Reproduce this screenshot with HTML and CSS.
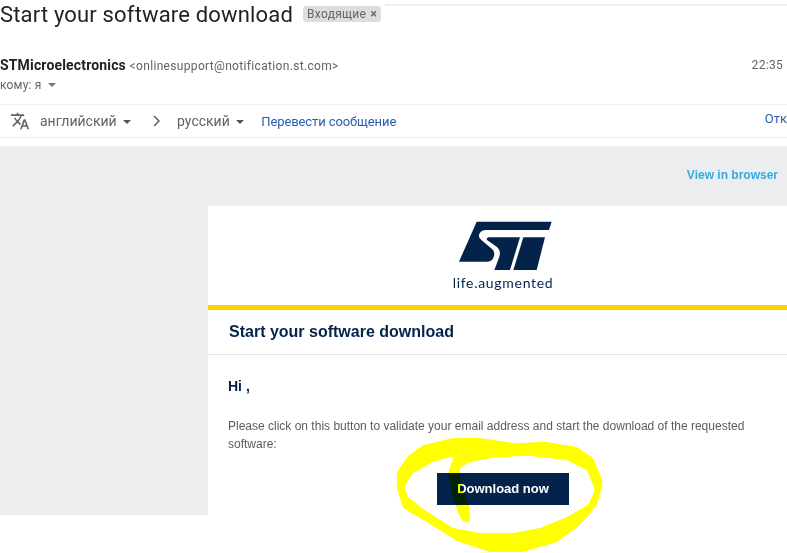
FILE: index.html
```html
<!DOCTYPE html>
<html lang="ru">
<head>
<meta charset="UTF-8" />
<meta name="viewport" content="width=device-width, initial-scale=1" />
<title>Start your software download</title>
<link rel="stylesheet" href="styles.css">
</head>
<body>
<div class="page">
  <div class="top-line"></div>

  <div class="subject">
    <h1>Start your software download</h1>
    <span class="label">Входящие <span class="label-x">×</span></span>
  </div>

  <div class="sender">
    <div><b>STMicroelectronics</b> <span class="address">&lt;onlinesupport@notification.st.com&gt;</span></div>
    <div class="time">22:35</div>
  </div>
  <div class="to">кому: я <span class="caret"></span></div>

  <div class="translate">
    <svg class="translate-icon" viewBox="0 0 24 24"><path d="M12.87 15.07l-2.54-2.51.03-.03c1.74-1.94 2.98-4.17 3.71-6.53H17V4h-7V2H8v2H1v1.99h11.17C11.5 7.92 10.44 9.75 9 11.35 8.07 10.32 7.3 9.19 6.69 8h-2c.73 1.63 1.73 3.17 2.98 4.56l-5.09 5.02L4 19l5-5 3.11 3.11.76-2.04zM18.5 10h-2L12 22h2l1.12-3h4.75L21 22h2l-4.5-12zm-2.62 7l1.62-4.33L19.12 17h-3.24z"/></svg>
    <span class="lang">английский <span class="caret dark"></span></span>
    <svg class="chevron" viewBox="0 0 8 12"><path d="M1 1l5 5-5 5"/></svg>
    <span class="lang">русский <span class="caret dark"></span></span>
    <a class="translate-link">Перевести сообщение</a>
    <a class="off-link">Отк</a>
  </div>

  <div class="mail-bg">
    <div class="browser-row"><a>View in browser</a></div>
    <div class="card">
      <div class="logo">
        <svg class="st-logo" viewBox="0 0 300 165">
          <path d="M65 20H290L282 45H95Q75 45 72 60Q70 68 80 76L112 103Q122 112 115 128Q110 140 95 140H12Z"/>
          <path d="M100 67H195L165 165H118L132 128Q140 108 125 95L97 76Q92 70 100 67Z"/>
          <path d="M205 67H270L245 165H175Z"/>
        </svg>
        <div class="tagline">life.augmented</div>
      </div>
      <h2>Start your software download</h2>
      <div class="body">
        <p class="hi">Hi ,</p>
        <p class="text">Please click on this button to validate your email address and start the download of the requested software:</p>
        <div class="btn-row"><a class="btn">Download now</a></div>
      </div>
    </div>
  </div>

  <!-- hand drawn marker ring, blur + threshold rounds off the corners -->
  <svg class="scribble" viewBox="0 0 787 553">
    <filter id="marker" filterUnits="userSpaceOnUse" x="380" y="420" width="240" height="133" color-interpolation-filters="sRGB">
      <feGaussianBlur stdDeviation="1.6"/>
      <feComponentTransfer>
        <feFuncA type="linear" slope="8" intercept="-3.5"/>
      </feComponentTransfer>
    </filter>
    <path class="ring" filter="url(#marker)" fill-rule="evenodd" d="M397 472L407 457L423 445L453 438L480 438L513 443L547 442L577 447L593 458L603 482L597 505L580 525L557 542L523 552L490 552L457 541L430 524L403 508L397 488Z
      M404 487L413 473L433 462L454 456L448 473L452 492L458 513L463 522L470 522L469 505L460 482L460 468L470 462L497 457L530 456L567 460L587 470L595 490L588 505L567 517L540 528L513 533L480 533L453 528L423 509L408 497Z"/>
  </svg>
</div>
</body>
</html>
```

FILE: styles.css
```css
html, body {
  margin: 0;
  height: 100%;
}
body {
  font-family: Roboto, "Liberation Sans", sans-serif;
  background: white;
  color: #222;
}
.page {
  position: relative;
  width: 787px;
  height: 553px;
  overflow: hidden;
}
.top-line {
  position: absolute;
  top: 4px;
  left: 385px;
  right: 0;
  height: 2px;
  background: #eee;
}
.subject {
  display: flex;
  align-items: center;
  height: 28px;
  gap: 10px;
}
.subject h1 {
  margin: 0;
  font-size: 22px;
  font-weight: 400;
  letter-spacing: 0.17px;
  white-space: nowrap;
}
.label {
  background: #ddd;
  color: #666;
  font-size: 12px;
  line-height: 16px;
  padding: 0 4px;
  border-radius: 3px;
  margin-top: -1px;
  letter-spacing: 0.3px;
}
.label-x {
  font-weight: bold;
  margin-left: 1px;
}
.sender {
  display: flex;
  justify-content: space-between;
  margin-top: 29px;
  padding-right: 4px;
  font-size: 14px;
  height: 17px;
  line-height: 17px;
  letter-spacing: 0.16px;
  white-space: nowrap;
}
.address {
  font-size: 12px;
  color: #5f6368;
  letter-spacing: 0.33px;
}
.time {
  font-size: 12px;
  color: #5f6368;
  letter-spacing: 0.3px;
}
.to {
  margin-top: 3px;
  font-size: 12px;
  color: #5f6368;
  height: 17px;
  line-height: 17px;
  letter-spacing: 0.2px;
}
.caret {
  display: inline-block;
  width: 0;
  height: 0;
  margin-left: 3px;
  vertical-align: 2px;
  border-left: 4px solid transparent;
  border-right: 4px solid transparent;
  border-top: 4px solid #777;
}
.caret.dark {
  border-top-color: #555;
}
.translate {
  display: flex;
  align-items: center;
  height: 32px;
  margin-top: 10px;
  border-top: 1px solid #eee;
  border-bottom: 1px solid #eee;
  font-size: 13px;
  color: #5f6368;
  white-space: nowrap;
}
.translate-icon {
  width: 20px;
  height: 20px;
  margin-left: 10px;
  fill: #5f6368;
}
.lang {
  font-size: 14px;
}
.translate-icon + .lang {
  margin-left: 10px;
}
.chevron {
  width: 8px;
  height: 12px;
  margin: 0 16px 0 22px;
  fill: none;
  stroke: #5f6368;
  stroke-width: 1.5;
}
.translate-link {
  margin-left: 17px;
  color: #2a5db0;
  letter-spacing: -0.1px;
}
.off-link {
  margin-left: auto;
  margin-top: -6px;
  color: #2a5db0;
}
.mail-bg {
  margin-top: 8px;
  height: 369px;
  background: #ebedef;
  font-family: "Liberation Sans", Arial, sans-serif;
}
.browser-row {
  height: 60px;
  padding-right: 9px;
  text-align: right;
  font-size: 12px;
  font-weight: bold;
  line-height: 58px;
  color: #39a9dc;
}
.card {
  margin-left: 208px;
  height: 309px;
  background: white;
  color: #03234b;
}
.logo {
  height: 99px;
  display: flex;
  flex-direction: column;
  align-items: center;
  border-bottom: 5px solid #ffd200;
  padding-left: 15px;
}
.st-logo {
  width: 100px;
  height: 55px;
  margin-top: 9px;
  fill: #03234b;
}
.tagline {
  font-family: Lato, sans-serif;
  font-size: 14px;
  line-height: 16px;
  margin: 5px 4px 0 0;
  letter-spacing: 0.7px;
}
.card h2 {
  margin: 0;
  height: 44px;
  line-height: 43px;
  padding-left: 21px;
  font-size: 16px;
  border-bottom: 1px solid #e6e6e6;
}
.body {
  padding: 0 40px 0 20px;
}
.hi {
  margin: 22px 0 0;
  font-size: 14px;
  font-weight: bold;
  line-height: 18px;
}
.text {
  margin: 22px 0 0;
  font-size: 12px;
  line-height: 18px;
  color: #5c5c5c;
}
.btn-row {
  display: flex;
  justify-content: center;
  margin-top: 20px;
  padding-left: 31px;
}
.btn {
  width: 132px;
  height: 32px;
  line-height: 31px;
  text-align: center;
  background: #03234b;
  color: white;
  font-size: 13px;
  font-weight: bold;
}
.scribble {
  position: absolute;
  left: 0;
  top: 0;
  width: 787px;
  height: 553px;
  mix-blend-mode: multiply;
  pointer-events: none;
}
.ring {
  fill: #ffff00;
}
```
